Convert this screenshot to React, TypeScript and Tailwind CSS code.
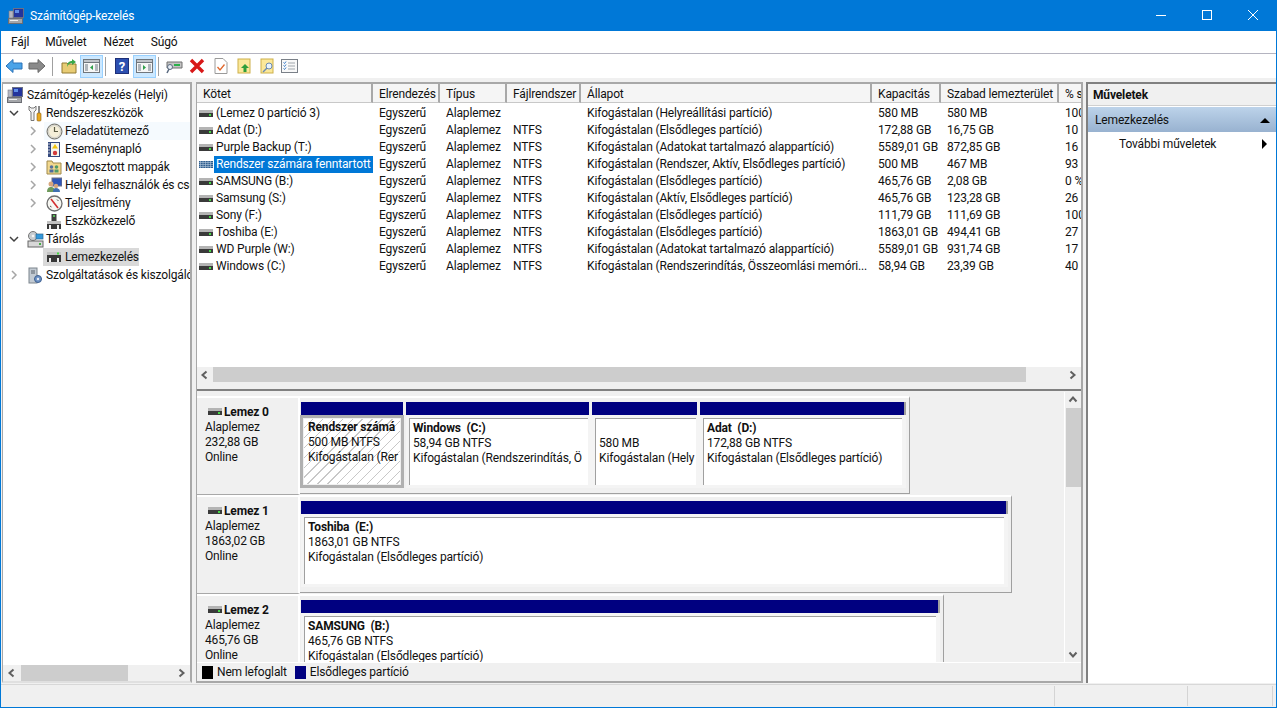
import React from 'react'

const drives = [
  ['(Lemez 0 partíció 3)', '', 'Kifogástalan (Helyreállítási partíció)', '580 MB', '580 MB', '100 %'],
  ['Adat (D:)', 'NTFS', 'Kifogástalan (Elsődleges partíció)', '172,88 GB', '16,75 GB', '10 %'],
  ['Purple Backup (T:)', 'NTFS', 'Kifogástalan (Adatokat tartalmazó alappartíció)', '5589,01 GB', '872,85 GB', '16 %'],
  ['Rendszer számára fenntartott', 'NTFS', 'Kifogástalan (Rendszer, Aktív, Elsődleges partíció)', '500 MB', '467 MB', '93 %'],
  ['SAMSUNG (B:)', 'NTFS', 'Kifogástalan (Elsődleges partíció)', '465,76 GB', '2,08 GB', '0 %'],
  ['Samsung (S:)', 'NTFS', 'Kifogástalan (Aktív, Elsődleges partíció)', '465,76 GB', '123,28 GB', '26 %'],
  ['Sony (F:)', 'NTFS', 'Kifogástalan (Elsődleges partíció)', '111,79 GB', '111,69 GB', '100 %'],
  ['Toshiba (E:)', 'NTFS', 'Kifogástalan (Elsődleges partíció)', '1863,01 GB', '494,41 GB', '27 %'],
  ['WD Purple (W:)', 'NTFS', 'Kifogástalan (Adatokat tartalmazó alappartíció)', '5589,01 GB', '931,74 GB', '17 %'],
  ['Windows (C:)', 'NTFS', 'Kifogástalan (Rendszerindítás, Összeomlási memóri...', '58,94 GB', '23,39 GB', '40 %'],
]

const gridCols = 'grid grid-cols-[176px_67px_67px_74px_291px_69px_118px_1fr]'

function DriveIcon({ hatched }: { hatched?: boolean }) {
  return (
    <svg width="16" height="9" viewBox="0 0 16 9" className="shrink-0">
      {hatched ? (
        <>
          <rect x="1" y="1" width="14" height="7" fill="#2f5f8f" />
          <path d="M1 2.500h14M1 4.500h14M1 6.500h14M2.500 1v7M5 1v7M7.500 1v7M10 1v7M12.500 1v7" stroke="#b4c8dc" strokeWidth="0.6" />
        </>
      ) : (
        <>
          <rect x="1" y="1" width="14" height="3" fill="#b4b4b4" />
          <rect x="1" y="4" width="14" height="4" fill="#3a3a3a" />
          <rect x="11" y="5" width="2" height="2" fill="#45d945" />
        </>
      )}
    </svg>
  )
}

function Chevron({ open }: { open?: boolean }) {
  return (
    <svg width="10" height="10" viewBox="0 0 10 10" className="shrink-0">
      <path d={open ? 'M1 3l4 4 4-4' : 'M3 1l4 4-4 4'} fill="none" stroke={open ? '#404040' : '#a6a6a6'} strokeWidth="1.5" />
    </svg>
  )
}

function ComputerIcon() {
  return (
    <svg width="16" height="16" viewBox="0 0 16 16" className="shrink-0">
      <rect x="0.500" y="10.500" width="14" height="5" fill="#a4a6aa" stroke="#6c6e74" />
      <rect x="2" y="12" width="8" height="1" fill="#eeeeee" />
      <rect x="5.500" y="0.500" width="10" height="9" fill="#23349c" stroke="#6a7086" />
      <rect x="7" y="2" width="4" height="3" fill="#5f8fe8" />
      <rect x="1" y="3" width="4" height="7" fill="#b4b6c0" stroke="#7a7c88" strokeWidth="0.6" />
    </svg>
  )
}

function TreeIcon({ kind }: { kind: string }) {
  if (kind === 'tools')
    return (
      <svg width="16" height="17" viewBox="0 0 16 17" className="shrink-0">
        <path d="M2 1v4l2 2v8.500h3V7l2-2V1L7 3H4z" fill="#f2f2f2" stroke="#6a6a6a" strokeWidth="0.9" />
        <rect x="11" y="1" width="2" height="7" fill="#8a8a8a" />
        <rect x="10" y="8" width="4" height="8" rx="1" fill="#e9a81e" stroke="#8a5b10" strokeWidth="0.6" />
      </svg>
    )
  if (kind === 'clock')
    return (
      <svg width="17" height="17" viewBox="0 0 17 17" className="shrink-0">
        <circle cx="8.500" cy="8.500" r="7.500" fill="#d8d6cc" stroke="#6f6f68" />
        <circle cx="8.500" cy="8.500" r="5.500" fill="#f5efd8" />
        <path d="M8.500 4v4.500H12" fill="none" stroke="#5a5a44" strokeWidth="1.200" />
      </svg>
    )
  if (kind === 'log')
    return (
      <svg width="16" height="17" viewBox="0 0 16 17" className="shrink-0">
        <rect x="2" y="1" width="12" height="15" fill="#34497e" />
        <rect x="5" y="2" width="8" height="13" fill="#f6f6ee" />
        <path d="M2 3h2M2 6h2M2 9h2M2 12h2" stroke="#c8ccd8" />
        <path d="M9 3l3 4.500H6z" fill="#f1c40f" />
        <circle cx="9" cy="12" r="2.200" fill="#d23a3a" />
      </svg>
    )
  if (kind === 'share')
    return (
      <svg width="16" height="16" viewBox="0 0 16 16" className="shrink-0">
        <path d="M1 2h5l1 2h8v11H1z" fill="#f2d88e" stroke="#a08a4c" />
        <circle cx="5.500" cy="8" r="1.800" fill="#58709e" />
        <circle cx="10.500" cy="8" r="1.800" fill="#4f9a6a" />
        <rect x="3.500" y="10.500" width="4" height="3" fill="#4d6a9e" />
        <rect x="8.500" y="10.500" width="4" height="3" fill="#4f9a6a" />
      </svg>
    )
  if (kind === 'users')
    return (
      <svg width="16" height="16" viewBox="0 0 16 16" className="shrink-0">
        <rect x="6" y="1" width="10" height="8" fill="#2e56b8" stroke="#707080" />
        <circle cx="5" cy="7" r="2.500" fill="#d7a77e" />
        <path d="M1 15c0-4 2-5 4-5s4 1 4 5z" fill="#6f9a5c" />
        <circle cx="10" cy="9" r="2.200" fill="#d7a77e" />
        <path d="M7 15c0-3 1-4 3-4s4 1 4 4z" fill="#3f6fb0" />
      </svg>
    )
  if (kind === 'perf')
    return (
      <svg width="17" height="17" viewBox="0 0 17 17" className="shrink-0">
        <circle cx="8.500" cy="8.500" r="7.500" fill="#f7f7f2" stroke="#6f6f6f" strokeWidth="1.300" />
        <path d="M5 4l7 9" stroke="#d22e2e" strokeWidth="1.600" />
        <path d="M11 4.500l1.500 1.500M4 11l1.500 1" stroke="#555" />
      </svg>
    )
  if (kind === 'device')
    return (
      <svg width="16" height="17" viewBox="0 0 16 17" className="shrink-0">
        <rect x="5.500" y="1" width="5" height="7" fill="#3f3f3f" />
        <rect x="7" y="2" width="2" height="2" fill="#58c058" />
        <rect x="1" y="8" width="14" height="3" fill="#c2c2c2" />
        <rect x="1" y="11" width="14" height="5" fill="#383838" />
        <rect x="3" y="12" width="2" height="4" fill="#f0f0f0" />
        <rect x="11" y="12" width="2" height="4" fill="#f0f0f0" />
      </svg>
    )
  if (kind === 'storage')
    return (
      <svg width="17" height="17" viewBox="0 0 17 17" className="shrink-0">
        <circle cx="6" cy="5" r="4.500" fill="#c8ccd0" stroke="#777" />
        <circle cx="6" cy="5" r="1.300" fill="#f4f4f4" />
        <rect x="9" y="3" width="7" height="5" fill="#3498db" stroke="#2c6a96" strokeWidth="0.700" />
        <rect x="1" y="10" width="15" height="6" fill="#d8d8d8" stroke="#666" />
        <rect x="12" y="12" width="2" height="2" fill="#45b045" />
      </svg>
    )
  if (kind === 'disk')
    return (
      <svg width="16" height="12" viewBox="0 0 16 12" className="shrink-0">
        <rect x="1" y="1" width="14" height="3" fill="#c4c4c4" />
        <rect x="1" y="4" width="14" height="7" fill="#383838" />
        <rect x="11" y="1.500" width="2" height="2" fill="#45d945" />
        <rect x="3" y="7" width="2" height="4" fill="#f0f0f0" />
        <rect x="11" y="7" width="2" height="4" fill="#f0f0f0" />
      </svg>
    )
  return (
    <svg width="16" height="17" viewBox="0 0 16 17" className="shrink-0">
      <rect x="2" y="1" width="8" height="15" fill="#c3cbd3" stroke="#7d858d" />
      <path d="M4 4h4M4 6h4" stroke="#59616a" />
      <circle cx="11" cy="12" r="3.500" fill="#6f93c5" stroke="#3d5f90" />
      <circle cx="11" cy="12" r="1.200" fill="#e8eef6" />
    </svg>
  )
}

function TreeRow({ level, label, icon, open, leaf, className = '' }: { level: number; label: string; icon: string; open?: boolean; leaf?: boolean; className?: string }) {
  return (
    <div className="h-[18px] flex items-center whitespace-nowrap">
      <div className={level === 1 ? 'w-[22px] shrink-0 pl-[6px]' : 'w-[41px] shrink-0 pl-[25px]'}>
        {!leaf && <Chevron open={open} />}
      </div>
      <div className={`flex items-center h-[18px] pl-[2px] pr-[1px] gap-[3px] grow ${className}`}>
        <div className="w-[16px] flex justify-center shrink-0"><TreeIcon kind={icon} /></div>
        <span>{label}</span>
      </div>
    </div>
  )
}

function ScrollArrow({ dir }: { dir: 'left' | 'right' | 'up' | 'down' }) {
  const d = { left: 'M6.500 1.500L2.500 5l4 3.500', right: 'M3.500 1.500L7.500 5l-4 3.500', up: 'M1.500 6.500L5 2.500l3.500 4', down: 'M1.500 3.500L5 7.500l3.500-4' }[dir]
  return (
    <svg width="10" height="10" viewBox="0 0 10 10">
      <path d={d} fill="none" stroke="#606060" strokeWidth="2" />
    </svg>
  )
}

function Partition({ width, name, lines, selected, blank, last }: { width: string; name?: string; lines: string[]; selected?: boolean; blank?: boolean; last?: boolean }) {
  return (
    <div className={`${width} shrink-0 flex flex-col`}>
      <div className={last ? 'h-[13px] bg-[#000080] border-r-2 border-[#a0a0a0]' : 'h-[13px] bg-[#000080] border-r-[3px] border-[#f0f0f0]'} />
      {selected ? (
        <div className="h-[73px] mr-[2px] -ml-[1px] border-[3px] border-[#b0b0b0] bg-[#f0f0f0] p-[1px]">
          <div className="h-full pl-[4px] pt-[1px] overflow-hidden whitespace-nowrap bg-[repeating-linear-gradient(135deg,#ffffff_0px,#ffffff_6px,#c8c8c8_6px,#c8c8c8_7px)]">
            <div className="h-[15px] font-bold leading-[15px]">{name}</div>
            {lines.map((l) => <div key={l} className="h-[15px] leading-[15px]">{l}</div>)}
          </div>
        </div>
      ) : (
        <div className="h-[73px] pl-[3px] pr-[4px] pt-[3px] pb-[3px] bg-[#f4f4f4]">
          <div className="h-full bg-white border-t border-l border-[#a0a0a0] pl-[3px] pt-[1px] overflow-hidden whitespace-pre">
            <div className="h-[15px] mt-[1px] font-bold leading-[15px]">{blank ? '' : name}</div>
            {lines.map((l) => <div key={l} className="h-[15px] leading-[15px]">{l}</div>)}
          </div>
        </div>
      )}
    </div>
  )
}

function DiskRow({ name, size, frame, children }: { name: string; size: string; frame: string; children: React.ReactNode }) {
  return (
    <div className="h-[99px] shrink-0 flex">
      <div className="w-[103px] shrink-0 border-t-2 border-b border-t-white border-b-[#a8a8a8] border-r-2 border-r-white pl-[8px] pt-[6px]">
        <div className="flex items-center h-[15px] gap-[1px] font-bold pl-[2px]"><DriveIcon /><span>{name}</span></div>
        <div className="leading-[15px] mt-[1px]">Alaplemez</div>
        <div className="leading-[15px]">{size}</div>
        <div className="leading-[15px]">Online</div>
      </div>
      <div className={`${frame} h-[98px] border-r border-b border-[#a0a0a0] border-t-2 border-t-white pt-[4px] flex`}>
        <div className="flex h-[86px] pl-[1px]">{children}</div>
      </div>
    </div>
  )
}

function ToolIcon({ children }: { children: React.ReactNode }) {
  return (
    <div className="w-[23px] h-[23px] flex items-center justify-center bg-[#cce8ff] border border-[#99d1ff]">
      {children}
    </div>
  )
}

function PaneIcon({ arrow }: { arrow: string }) {
  return (
    <svg width="17" height="16" viewBox="0 0 17 16">
      <rect x="0.500" y="1.500" width="16" height="13" fill="#f6f6f6" stroke="#70767c" />
      <rect x="0.500" y="1.500" width="16" height="3" fill="#c0c4ca" stroke="#70767c" />
      <rect x="2" y="6" width="3" height="7" fill="#b0b6bc" />
      <rect x="12" y="6" width="3" height="7" fill="#b0b6bc" />
      <path d={arrow} fill="#2f9e4a" />
    </svg>
  )
}

function Sep() {
  return <div className="w-px h-[19px] bg-[#a0a0a0] mx-[1px]" />
}

export default function App() {
  return (
    <div className="w-[1277px] h-[708px] flex flex-col overflow-hidden bg-[#f0f0f0] border-x border-b border-[#0078d7] text-[12px] tracking-[-0.15px] text-[#111111] font-['Roboto','Liberation_Sans',sans-serif]">
      {/* title bar */}
      <div className="h-[31px] shrink-0 bg-[#0078d7] flex items-center text-white pl-[7px]">
        <ComputerIcon />
        <span className="ml-[6px]">Számítógép-kezelés</span>
        <div className="ml-auto flex items-center h-full">
          <svg width="46" height="31" viewBox="0 0 46 31"><path d="M18 15.500h10" stroke="#fff" /></svg>
          <svg width="46" height="31" viewBox="0 0 46 31"><rect x="18.500" y="10.500" width="9" height="9" fill="none" stroke="#fff" /></svg>
          <svg width="46" height="31" viewBox="0 0 46 31"><path d="M18 10l10 10M28 10L18 20" stroke="#fff" /></svg>
        </div>
      </div>
      {/* menu */}
      <div className="h-[23px] shrink-0 bg-white border-b border-[#b4b4c0] flex items-center pl-[10px] gap-[16px]">
        <span>Fájl</span>
        <span>Művelet</span>
        <span className="ml-[1px]">Nézet</span>
        <span className="ml-[1px]">Súgó</span>
      </div>
      {/* toolbar */}
      <div className="h-[24px] shrink-0 bg-white flex items-center pl-[4px]">
        <svg width="18" height="16" viewBox="0 0 18 16"><path d="M1 8l7-6.500v3.500h9v6H8v3.500z" fill="#4aa3e8" stroke="#2b72b8" /></svg>
        <div className="w-[5px]" />
        <svg width="18" height="16" viewBox="0 0 18 16"><path d="M17 8l-7-6.500v3.500H1v6h9v3.500z" fill="#8a8a8a" stroke="#666" /></svg>
        <div className="w-[5px]" />
        <Sep />
        <div className="w-[7px]" />
        <svg width="16" height="16" viewBox="0 0 16 16"><path d="M1 5h5l1 1h8v9H1z" fill="#e8cc74" stroke="#927a32" /><path d="M6 9c0-4 2-6 5-6V1l4 3-4 3V5c-2 0-4 1-5 4z" fill="#3aa84a" /></svg>
        <div className="w-[3px]" />
        <ToolIcon><PaneIcon arrow="M10 7v5L7 9.500z" /></ToolIcon>
        <div className="w-[1px]" />
        <Sep />
        <div className="w-[8px]" />
        <svg width="14" height="16" viewBox="0 0 14 16"><rect x="0.500" y="0.500" width="13" height="15" fill="#2c4fb0" stroke="#1d2f78" /><text x="7" y="13" textAnchor="middle" fontSize="13" fontWeight="700" fill="#fff">?</text></svg>
        <div className="w-[4px]" />
        <ToolIcon><PaneIcon arrow="M7 7v5l3-2.500z" /></ToolIcon>
        <div className="w-[1px]" />
        <Sep />
        <div className="w-[6px]" />
        <svg width="17" height="16" viewBox="0 0 17 16"><path d="M1 4h15v6H1z" fill="#c4c4c4" stroke="#707070" /><rect x="8" y="6" width="6" height="2" fill="#2ab04a" /><circle cx="4" cy="9" r="2.500" fill="#e8eef6" stroke="#5a6a80" /><path d="M3 11l-2 4" stroke="#5a6a80" strokeWidth="1.500" /></svg>
        <div className="w-[6px]" />
        <svg width="16" height="16" viewBox="0 0 16 16"><path d="M2 2l12 12M14 2L2 14" stroke="#d81818" strokeWidth="3.400" /></svg>
        <div className="w-[9px]" />
        <svg width="14" height="16" viewBox="0 0 14 16"><path d="M1 .5h8l4 4v11H1z" fill="#fff" stroke="#9a9a9a" /><path d="M3.500 9l2.500 3 4.500-5.500" fill="none" stroke="#e0672c" strokeWidth="1.300" /></svg>
        <div className="w-[9px]" />
        <svg width="14" height="16" viewBox="0 0 14 16"><rect x="1" y="1" width="12" height="14" fill="#fbe89a" stroke="#cdb04a" /><path d="M8 6l4 4H9.500v4h-3v-4H4z" fill="#2f9e3a" /></svg>
        <div className="w-[9px]" />
        <svg width="14" height="16" viewBox="0 0 14 16"><rect x="1" y="1" width="12" height="14" fill="#fbe89a" stroke="#cdb04a" /><circle cx="9" cy="8" r="3" fill="#e8f4ff" stroke="#6a8ab0" /><path d="M7 10l-4 4" stroke="#6a8ab0" strokeWidth="1.500" /></svg>
        <div className="w-[7px]" />
        <svg width="17" height="14" viewBox="0 0 17 14"><rect x="0.500" y="0.500" width="16" height="13" fill="#f8f8f8" stroke="#7a8088" /><path d="M7 4h7M7 7h7M7 10h7" stroke="#a0a6ac" /><path d="M2.500 3.500l1 1 1.500-2M2.500 6.500l1 1 1.500-2M2.500 9.500l1 1 1.500-2" fill="none" stroke="#3278c8" /></svg>
      </div>

      {/* panes */}
      <div className="flex-1 min-h-0 flex pt-[4px] pb-[1px] pl-[1px]">
        {/* tree */}
        <div className="w-[190px] shrink-0 flex flex-col bg-white border-t-2 border-l border-[#a8a8a8] border-r-2 border-b-2 border-b-[#e0e0e0] overflow-hidden">
          <div className="flex-1 min-h-0 pt-[2px] overflow-hidden">
            <div className="h-[18px] flex items-center pl-[4px] gap-[4px] whitespace-nowrap"><ComputerIcon /><span>Számítógép-kezelés (Helyi)</span></div>
            <TreeRow level={1} icon="tools" label="Rendszereszközök" open leaf={false} />
            <TreeRow level={2} icon="clock" label="Feladatütemező" className="bg-[#f5fafe]" />
            <TreeRow level={2} icon="log" label="Eseménynapló" />
            <TreeRow level={2} icon="share" label="Megosztott mappák" />
            <TreeRow level={2} icon="users" label="Helyi felhasználók és csoportok" />
            <TreeRow level={2} icon="perf" label="Teljesítmény" />
            <TreeRow level={2} icon="device" label="Eszközkezelő" leaf />
            <TreeRow level={1} icon="storage" label="Tárolás" open />
            <div className="h-[18px] flex items-center whitespace-nowrap pl-[40px]">
              <div className="flex items-center h-[18px] bg-[#d9d9d9] pl-[3px] gap-[3px]">
                <TreeIcon kind="disk" />
                <span>Lemezkezelés</span>
              </div>
            </div>
            <TreeRow level={1} icon="services" label="Szolgáltatások és kiszolgálóalkalmazások" />
          </div>
          <div className="h-[16px] shrink-0 bg-[#f0f0f0] flex items-center">
            <div className="w-[18px] flex justify-center"><ScrollArrow dir="left" /></div>
            <div className="w-[107px] h-full bg-[#cdcdcd]" />
            <div className="ml-auto w-[18px] flex justify-center"><ScrollArrow dir="right" /></div>
          </div>
        </div>

        <div className="w-[4px] shrink-0" />

        {/* center */}
        <div className="w-[887px] shrink-0 flex flex-col border-t-2 border-l border-[#a8a8a8] border-r-2 border-r-[#a8a8a8] overflow-hidden">
          {/* volume list */}
          <div className="h-[307px] shrink-0 flex flex-col bg-white border-b-2 border-[#808080]">
            <div className={`${gridCols} h-[19px] shrink-0 bg-[#f5f5f5]`}>
              {['Kötet', 'Elrendezés', 'Típus', 'Fájlrendszer', 'Állapot', 'Kapacitás', 'Szabad lemezterület', '% s'].map((h) => (
                <div key={h} className="border-r-2 border-b border-r-[#a8a8a8] border-b-[#c8c8c8] pl-[6px] pt-[2px] flex items-center overflow-hidden whitespace-nowrap last:border-r-0">{h}</div>
              ))}
            </div>
            <div className="flex-1 min-h-0 pt-[1px]">
              {drives.map((d) => {
                const sel = d[0] === 'Rendszer számára fenntartott'
                return (
                  <div key={d[0]} className={`${gridCols} h-[17px] items-center whitespace-nowrap`}>
                    <div className="flex items-center pl-[1px] overflow-hidden h-[17px]">
                      <DriveIcon hatched={sel} />
                      <span className={sel ? 'bg-[#0078d7] text-white h-[17px] leading-[17px] grow pl-[2px]' : 'pl-[2px]'}>{d[0]}</span>
                    </div>
                    <div className="pl-[6px]">Egyszerű</div>
                    <div className="pl-[6px]">Alaplemez</div>
                    <div className="pl-[6px]">{d[1]}</div>
                    <div className="pl-[6px] overflow-hidden">{d[2]}</div>
                    <div className="pl-[6px]">{d[3]}</div>
                    <div className="pl-[6px]">{d[4]}</div>
                    <div className="pl-[6px] overflow-hidden">{d[5]}</div>
                  </div>
                )
              })}
            </div>
            <div className="h-[15px] shrink-0 bg-[#f0f0f0] flex items-center">
              <div className="w-[16px] flex justify-center"><ScrollArrow dir="left" /></div>
              <div className="w-[813px] h-full bg-[#cdcdcd]" />
              <div className="ml-auto w-[18px] flex justify-center"><ScrollArrow dir="right" /></div>
            </div>
            <div className="h-[7px] shrink-0 bg-[#f0f0f0]" />
          </div>

          {/* graphical view */}
          <div className="flex-1 min-h-0 flex flex-col pt-[1px]">
            <div className="flex-1 min-h-0 flex overflow-hidden">
              <div className="flex-1 min-w-0 flex flex-col overflow-hidden pt-[4px] border-r border-white">
                <DiskRow name="Lemez 0" size="232,88 GB" frame="w-[610px]">
                  <Partition width="w-[105px]" name="Rendszer számá" lines={['500 MB NTFS', 'Kifogástalan (Rer']} selected />
                  <Partition width="w-[186px]" name="Windows  (C:)" lines={['58,94 GB NTFS', 'Kifogástalan (Rendszerindítás, Ö']} />
                  <Partition width="w-[108px]" lines={['580 MB', 'Kifogástalan (Hely']} blank />
                  <Partition width="w-[206px]" name="Adat  (D:)" lines={['172,88 GB NTFS', 'Kifogástalan (Elsődleges partíció)']} last />
                </DiskRow>
                <DiskRow name="Lemez 1" size="1863,02 GB" frame="w-[712px]">
                  <Partition width="w-[707px]" name="Toshiba  (E:)" lines={['1863,01 GB NTFS', 'Kifogástalan (Elsődleges partíció)']} last />
                </DiskRow>
                <DiskRow name="Lemez 2" size="465,76 GB" frame="w-[644px]">
                  <Partition width="w-[639px]" name="SAMSUNG  (B:)" lines={['465,76 GB NTFS', 'Kifogástalan (Elsődleges partíció)']} last />
                </DiskRow>
              </div>
              <div className="w-[16px] shrink-0 flex flex-col items-center">
                <div className="h-[16px] shrink-0 flex items-center"><ScrollArrow dir="up" /></div>
                <div className="w-[15px] h-[79px] bg-[#cdcdcd]" />
                <div className="mt-auto h-[16px] flex items-center"><ScrollArrow dir="down" /></div>
              </div>
            </div>
            <div className="h-[21px] shrink-0 flex items-center pl-[5px] border-t border-white border-b-2 border-b-[#a8a8a8]">
              <div className="w-[11px] h-[13px] bg-black" />
              <span className="ml-[4px]">Nem lefoglalt</span>
              <div className="w-[11px] h-[13px] bg-[#000080] ml-[8px]" />
              <span className="ml-[4px]">Elsődleges partíció</span>
            </div>
          </div>
        </div>

        <div className="w-[3px] shrink-0" />

        {/* actions */}
        <div className="flex-1 min-w-0 flex flex-col bg-white border-t-2 border-l-2 border-[#808080]">
          <div className="h-[22px] shrink-0 pt-[1px] bg-[#f0f0f0] border-b border-[#d0d0d0] flex items-center pl-[5px] font-bold">Műveletek</div>
          <div className="h-[25px] shrink-0 mt-[1px] bg-gradient-to-b from-[#bdd3ea] to-[#98b2d0] flex items-center pl-[7px]">
            <span>Lemezkezelés</span>
            <svg width="10" height="6" viewBox="0 0 10 6" className="ml-auto mr-[6px]"><path d="M0 6l5-5 5 5z" fill="#000" /></svg>
          </div>
          <div className="h-[24px] flex items-center pl-[31px]">
            <span>További műveletek</span>
            <svg width="6" height="10" viewBox="0 0 6 10" className="ml-auto mr-[8px]"><path d="M0 0l5 5-5 5z" fill="#000" /></svg>
          </div>
        </div>
      </div>

      {/* status bar */}
      <div className="h-[23px] shrink-0 flex border-t border-[#d8d8d8] bg-[#f0f0f0] py-[1px]">
        <div className="w-[1054px] shrink-0 border-r border-[#d4d4d4]" />
        <div className="w-[133px] shrink-0 border-r border-[#d4d4d4]" />
        <div className="w-[85px] shrink-0 border-r border-[#d4d4d4]" />
      </div>
    </div>
  )
}
